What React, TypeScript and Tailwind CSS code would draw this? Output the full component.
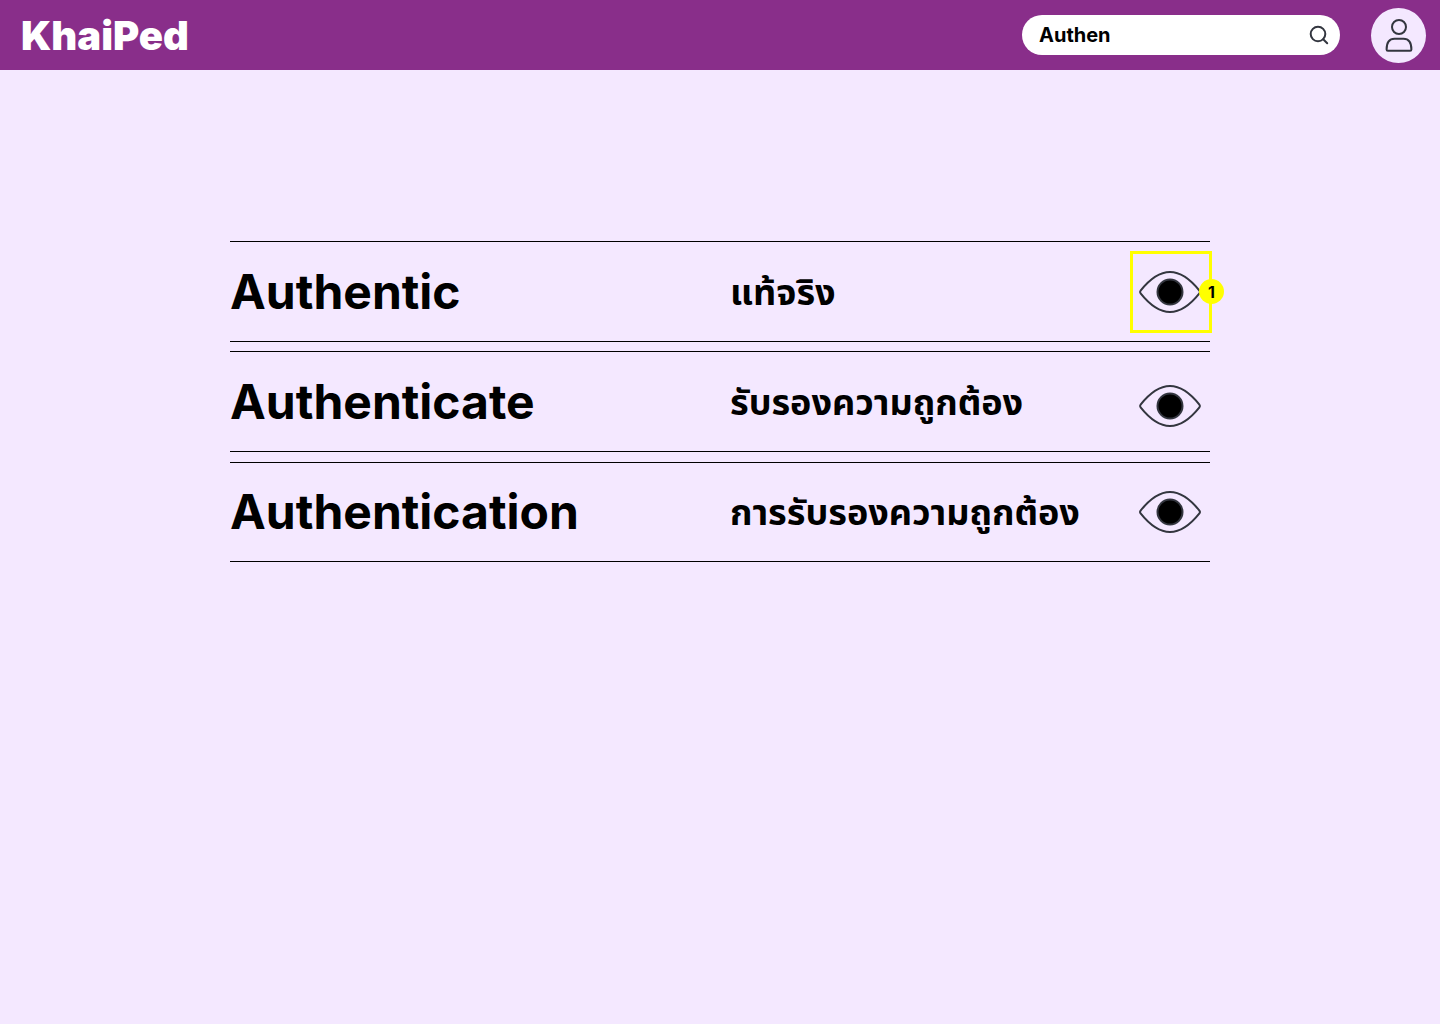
const entries = [
  { word: "Authentic", meaning: "แท้จริง" },
  { word: "Authenticate", meaning: "รับรองความถูกต้อง" },
  { word: "Authentication", meaning: "การรับรองความถูกต้อง" },
];

function EyeIcon() {
  return (
    <svg width="64" height="44" viewBox="0 0 64 44" fill="none" stroke="#33363f" strokeWidth="2" strokeLinejoin="round" aria-hidden="true">
      <path d="M2.600 20.600C8.500 13.200 19.300 2 32 2s23.500 11.200 29.400 18.600c.7.9.7 1.900 0 2.800C55.500 30.800 44.700 42 32 42S8.500 30.800 2.600 23.400c-.7-.9-.7-1.900 0-2.800Z" />
      <circle cx="32" cy="22" r="12.5" fill="#000" />
    </svg>
  );
}

export default function App() {
  return (
    <div className="min-h-screen bg-[#f4e8ff] text-black font-['Inter','Noto_Sans_Thai','Noto_Sans',sans-serif]">
      <header className="flex h-[70px] items-center bg-[#892e8a] pr-[14px] pl-[21px]">
        <h1 className="pt-[2px] text-[40px] leading-[48px] font-black text-white">KhaiPed</h1>
        <form role="search" className="ml-auto flex h-10 w-[318px] items-center rounded-full bg-white pr-[10px] pl-[17px]" onSubmit={(e) => e.preventDefault()}>
          <input aria-label="Search" defaultValue="Authen" className="min-w-0 flex-1 text-xl font-bold outline-none" />
          <button type="submit" aria-label="Submit search">
            <svg width="22" height="22" viewBox="0 0 22 22" fill="none" stroke="#33363f" strokeWidth="2" strokeLinecap="round" aria-hidden="true">
              <circle cx="10" cy="10" r="7.3" />
              <path d="m15.200 15.200 4 4" />
            </svg>
          </button>
        </form>
        <button aria-label="Account" className="ml-[31px] flex size-[55px] items-center justify-center rounded-full bg-[#f4e8ff]">
          <svg width="28" height="36" viewBox="0 0 28 36" fill="none" stroke="#33363f" strokeWidth="2" strokeLinejoin="round" aria-hidden="true">
            <circle cx="14" cy="10" r="7" />
            <path d="M1.600 32.500C1.600 26.500 4 21.800 9.500 21.800h9c5.500 0 7.900 4.700 7.900 10.700 0 .8-.5 1.300-1.300 1.300H2.900c-.8 0-1.300-.5-1.300-1.300Z" />
          </svg>
        </button>
      </header>
      <main className="mx-auto flex max-w-[980px] flex-col gap-[9px] pt-[171px]">
        {entries.map(({ word, meaning }, i) => (
          <article key={word} className={i === 2 ? "mt-px flex h-[100px] items-center border-y border-black" : "flex h-[101px] items-center border-y border-black"}>
            <h2 className="w-[500px] text-5xl font-bold">{word}</h2>
            <p lang="th" className="flex-1 text-4xl font-bold">{meaning}</p>
            <button
              aria-label={`View ${word}`}
              className={
                i === 0
                  ? "relative -mr-[2px] flex size-[82px] items-center border-3 border-[#ffff00] pl-[5px]"
                  : i === 1
                    ? "mr-2 pt-2"
                    : "mr-2"
              }
            >
              <EyeIcon />
              {i === 0 && (
                <span className="absolute -right-[15px] flex size-[25px] items-center justify-center rounded-full bg-[#ffff00] text-base font-bold">1</span>
              )}
            </button>
          </article>
        ))}
      </main>
    </div>
  );
}
